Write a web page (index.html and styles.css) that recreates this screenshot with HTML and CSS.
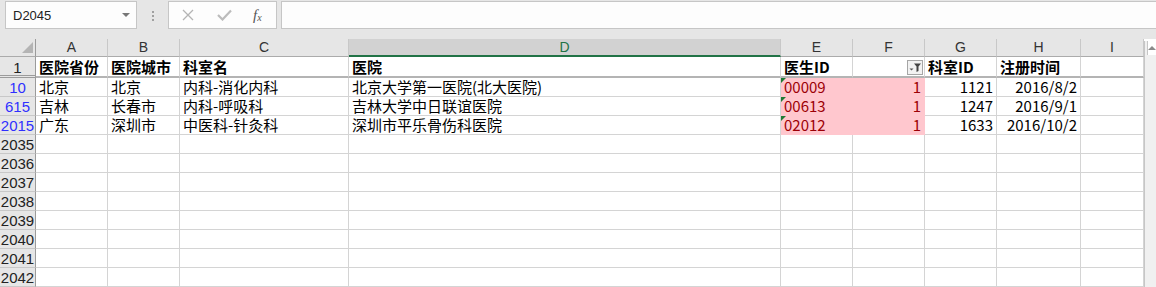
FILE: index.html
```html
<!DOCTYPE HTML>
<html>
	<head>
		<meta charset="utf-8">
		<meta name="viewport" content="width=device-width">
		<link rel="stylesheet" href="styles.css">
		<title>医生信息表</title>
	</head>
	<body>
		<div class="topbar">
			<div class="namebox">
				<span>D2045</span>
				<span class="drop"></span>
			</div>
			<div class="dots"><i></i><i></i><i></i></div>
			<div class="fxbox">
				<span class="cancel">
					<svg width="12" height="12" viewBox="0 0 12 12"><path d="M1 1 L11 11 M11 1 L1 11" fill="none" stroke="#b4b4b4" stroke-width="1.3"/></svg>
				</span>
				<span class="enter">
					<svg width="15" height="12" viewBox="0 0 15 12"><path d="M1 6 L5.5 10.5 L14 1.5" fill="none" stroke="#bcbcbc" stroke-width="2.2"/></svg>
				</span>
				<span class="fx">f<sub>x</sub></span>
			</div>
			<div class="formula"></div>
		</div>

		<div class="sheet-wrap">
			<div class="sheet">
				<!-- column headers -->
				<div class="h corner"><span class="selall"></span></div>
				<div class="h">A</div>
				<div class="h">B</div>
				<div class="h">C</div>
				<div class="h sel">D</div>
				<div class="h">E</div>
				<div class="h">F</div>
				<div class="h">G</div>
				<div class="h">H</div>
				<div class="h">I</div>

				<!-- row 1 -->
				<div class="rh first">1</div>
				<div class="c b first">医院省份</div>
				<div class="c b first">医院城市</div>
				<div class="c b first">科室名</div>
				<div class="c b first">医院</div>
				<div class="c b first">医生ID</div>
				<div class="c first filter-cell">
					<span class="filter">
						<svg width="16" height="15" viewBox="0 0 16 15">
							<polygon points="2.5,8.5 6.5,8.5 4.5,10.5" fill="#555"/>
							<polygon points="7,3.5 14,3.5 11.5,6.5 11.5,11 9.5,12 9.5,6.5" fill="#444"/>
						</svg>
					</span>
				</div>
				<div class="c b first">科室ID</div>
				<div class="c b first">注册时间</div>
				<div class="c first"></div>

				<div class="rh hit">10</div>
				<div class="c">北京</div>
				<div class="c">北京</div>
				<div class="c">内科-消化内科</div>
				<div class="c">北京大学第一医院(北大医院)</div>
				<div class="c bad txt">00009</div>
				<div class="c bad num">1</div>
				<div class="c num">1121</div>
				<div class="c num">2016/8/2</div>
				<div class="c"></div>

				<div class="rh hit">615</div>
				<div class="c">吉林</div>
				<div class="c">长春市</div>
				<div class="c">内科-呼吸科</div>
				<div class="c">吉林大学中日联谊医院</div>
				<div class="c bad txt">00613</div>
				<div class="c bad num">1</div>
				<div class="c num">1247</div>
				<div class="c num">2016/9/1</div>
				<div class="c"></div>

				<div class="rh hit">2015</div>
				<div class="c">广东</div>
				<div class="c">深圳市</div>
				<div class="c">中医科-针灸科</div>
				<div class="c">深圳市平乐骨伤科医院</div>
				<div class="c bad txt">02012</div>
				<div class="c bad num">1</div>
				<div class="c num">1633</div>
				<div class="c num">2016/10/2</div>
				<div class="c"></div>

				<div class="rh">2035</div><div class="c"></div><div class="c"></div><div class="c"></div><div class="c"></div><div class="c"></div><div class="c"></div><div class="c"></div><div class="c"></div><div class="c"></div>
				<div class="rh">2036</div><div class="c"></div><div class="c"></div><div class="c"></div><div class="c"></div><div class="c"></div><div class="c"></div><div class="c"></div><div class="c"></div><div class="c"></div>
				<div class="rh">2037</div><div class="c"></div><div class="c"></div><div class="c"></div><div class="c"></div><div class="c"></div><div class="c"></div><div class="c"></div><div class="c"></div><div class="c"></div>
				<div class="rh">2038</div><div class="c"></div><div class="c"></div><div class="c"></div><div class="c"></div><div class="c"></div><div class="c"></div><div class="c"></div><div class="c"></div><div class="c"></div>
				<div class="rh">2039</div><div class="c"></div><div class="c"></div><div class="c"></div><div class="c"></div><div class="c"></div><div class="c"></div><div class="c"></div><div class="c"></div><div class="c"></div>
				<div class="rh">2040</div><div class="c"></div><div class="c"></div><div class="c"></div><div class="c"></div><div class="c"></div><div class="c"></div><div class="c"></div><div class="c"></div><div class="c"></div>
				<div class="rh">2041</div><div class="c"></div><div class="c"></div><div class="c"></div><div class="c"></div><div class="c"></div><div class="c"></div><div class="c"></div><div class="c"></div><div class="c"></div>
				<div class="rh">2042</div><div class="c"></div><div class="c"></div><div class="c"></div><div class="c"></div><div class="c"></div><div class="c"></div><div class="c"></div><div class="c"></div><div class="c"></div>
			</div>
			<div class="vscroll">
				<div class="up"></div>
			</div>
		</div>
	</body>
</html>
```

FILE: styles.css
```css
* {
	box-sizing: border-box;
}

body {
	margin: 0;
	background: #ffffff;
	font-family: "Noto Sans CJK SC", "Liberation Sans", sans-serif;
	overflow: hidden;
}

/* formula bar */
.topbar {
	display: flex;
	align-items: flex-start;
	height: 39px;
	padding: 1px 0 0 5px;
	background: #e6e6e6;
}
.namebox {
	display: flex;
	align-items: center;
	justify-content: space-between;
	width: 132px;
	height: 28px;
	padding: 0 6px 0 7px;
	background: #fdfdfd;
	border: 1px solid #c6c6c6;
	font-family: "Liberation Sans", sans-serif;
	font-size: 13px;
	color: #222;
}
.drop {
	width: 0;
	height: 0;
	border-left: 4px solid transparent;
	border-right: 4px solid transparent;
	border-top: 4px solid #777;
}
.dots {
	display: flex;
	flex-direction: column;
	gap: 2px;
	width: 31px;
	padding: 10px 0 0 15px;
}
.dots i {
	display: block;
	width: 2px;
	height: 2px;
	background: #a0a0a0;
}
.fxbox {
	display: flex;
	align-items: center;
	width: 109px;
	height: 28px;
	background: #fdfdfd;
	border: 1px solid #c6c6c6;
}
.cancel {
	display: flex;
	width: 48px;
	padding-left: 13px;
}
.enter {
	display: flex;
	width: 36px;
}
.fx {
	font-family: "Liberation Serif", serif;
	font-style: italic;
	font-size: 15px;
	color: #555;
}
.fx sub {
	font-size: 10px;
	vertical-align: -1px;
}
.formula {
	flex: 1;
	height: 28px;
	margin-left: 4px;
	background: #fdfdfd;
	border: 1px solid #c6c6c6;
	border-right: none;
}

/* sheet */
.sheet-wrap {
	display: flex;
}
.sheet {
	display: grid;
	grid-template-columns: 36px 72px 72px 169px 432px 72px 72px 72px 84px 63px;
	grid-template-rows: 18px 21px repeat(11, 19px);
	width: 1144px;
}
.h {
	background: #e6e6e6;
	border-right: 1px solid #c8c8c8;
	border-bottom: 1px solid #ababab;
	text-align: center;
	font-family: "Liberation Sans", sans-serif;
	font-size: 14px;
	line-height: 17px;
	color: #333;
}
.h.sel {
	background: #d2d2d2;
	color: #217346;
	border-bottom: 2px solid #217346;
}
.corner {
	display: flex;
	justify-content: flex-end;
	align-items: flex-end;
	padding: 0 2px 3px 0;
	border-right: 1px solid #9b9b9b;
}
.selall {
	width: 0;
	height: 0;
	border-left: 11px solid transparent;
	border-bottom: 11px solid #b4b4b4;
}
.rh {
	background: #e6e6e6;
	border-right: 1px solid #9b9b9b;
	border-bottom: 1px solid #c8c8c8;
	text-align: center;
	font-family: "Liberation Sans", sans-serif;
	font-size: 15px;
	line-height: 19px;
	color: #222;
	white-space: nowrap;
}
.rh.first {
	border-bottom: 3px double #9b9b9b;
	line-height: 22px;
}
.rh.hit {
	color: #2f2fff;
}
.c {
	position: relative;
	border-right: 1px solid #d4d4d4;
	border-bottom: 1px solid #d4d4d4;
	padding: 0 3px;
	font-size: 15px;
	line-height: 18px;
	color: #000;
	white-space: nowrap;
}
.c.first {
	border-bottom: 2px solid #b4b4b4;
	line-height: 20px;
}
.b {
	font-weight: bold;
}
.num {
	text-align: right;
}
.bad {
	background: #ffc7ce;
	color: #9c0006;
	border-color: #ffc7ce;
}
.txt::before {
	content: "";
	position: absolute;
	left: 0;
	top: 0;
	border-top: 5px solid #1e7b34;
	border-right: 5px solid transparent;
}
.filter-cell {
	display: flex;
	justify-content: flex-end;
	align-items: flex-end;
	padding: 0 1px 1px 0;
}
.filter {
	display: flex;
	width: 16px;
	height: 15px;
	background: #f2f2f2;
	border: 1px solid #a6a6a6;
}
.filter svg {
	margin: -1px;
}

/* scroll bar */
.vscroll {
	flex: 1;
	margin-top: 2px;
	border-left: 1px solid #c6c6c6;
	padding-left: 2px;
	background: #f0f0f0;
}
.up {
	height: 14px;
	border-left: 1px solid #c6c6c6;
	background: #ffffff;
	display: flex;
	justify-content: center;
	align-items: center;
}
.up::before {
	content: "";
	border-left: 4px solid transparent;
	border-right: 4px solid transparent;
	border-bottom: 4px solid #8a8a8a;
}
```
